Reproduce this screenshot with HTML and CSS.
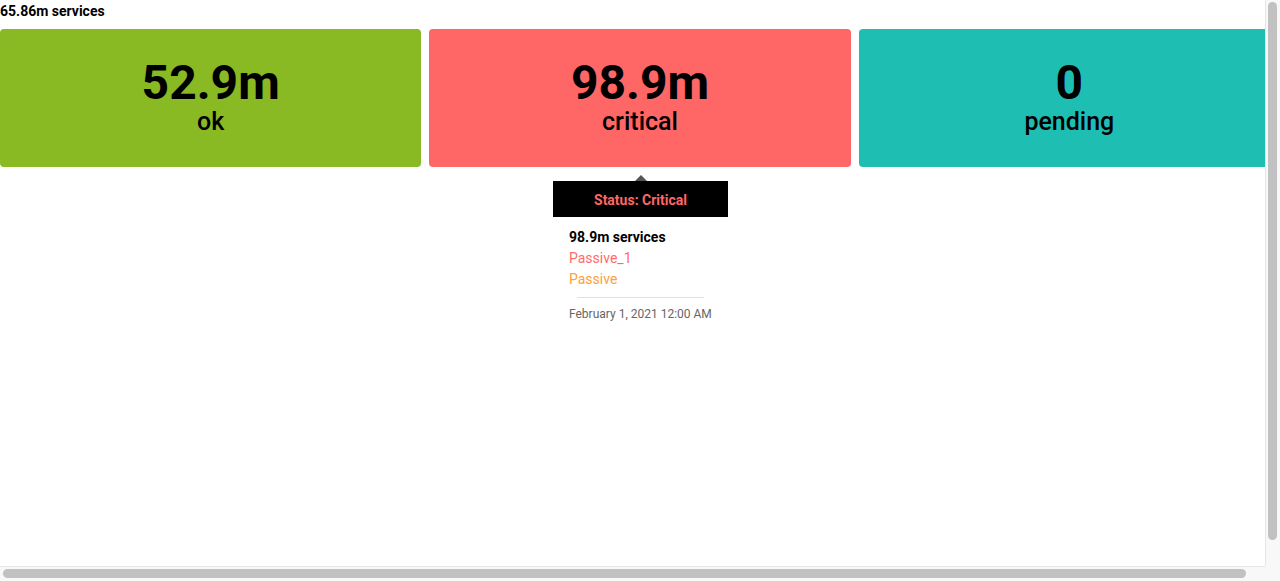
FILE: index.html
```html
<!DOCTYPE html>
<html lang="en">
<head>
<meta charset="utf-8">
<title>Services</title>
<link rel="stylesheet" href="styles.css">
</head>
<body>
<div class="page">
  <div class="title">65.86m services</div>
  <div class="cards">
    <div class="card card-ok">
      <div class="value">52.9m</div>
      <div class="label">ok</div>
    </div>
    <div class="card card-critical">
      <div class="value">98.9m</div>
      <div class="label">critical</div>
    </div>
    <div class="card card-pending">
      <div class="value">0</div>
      <div class="label">pending</div>
    </div>
  </div>
  <div class="tooltip">
    <div class="tooltip-arrow"></div>
    <div class="tooltip-head">Status: Critical</div>
    <div class="tooltip-body">
      <div class="tt-row tt-strong">98.9m services</div>
      <div class="tt-row tt-red">Passive_1</div>
      <div class="tt-row tt-orange">Passive</div>
      <div class="tt-divider"></div>
      <div class="tt-date">February 1, 2021 12:00 AM</div>
    </div>
  </div>
</div>
<div class="sb sb-v"><div class="sb-thumb sb-thumb-v"></div></div>
<div class="sb sb-h"><div class="sb-thumb sb-thumb-h"></div></div>
<div class="sb sb-corner"></div>
</body>
</html>
```
FILE: styles.css
```css
html, body {
  margin: 0;
  padding: 0;
  background: #ffffff;
  overflow: hidden;
}
body {
  font-family: Roboto, "Liberation Sans", Arial, sans-serif;
  color: #000;
}
.page {
  position: relative;
  width: 1280px;
  min-height: 591px;
}
.title {
  font-size: 14px;
  font-weight: 700;
  line-height: 22px;
  margin-bottom: 7px;
}
.cards {
  display: grid;
  grid-template-columns: repeat(3, 1fr);
  gap: 8px;
}
.card {
  height: 138px;
  box-sizing: border-box;
  padding-top: 30px;
  border-radius: 4px;
  display: flex;
  flex-direction: column;
  align-items: center;
  color: #000;
}
.card-ok { background: #89b923; }
.card-critical { background: #ff6666; }
.card-pending { background: #1fbeb2; }
.value {
  font-size: 48px;
  font-weight: 700;
  line-height: 48px;
}
.label {
  font-size: 25px;
  font-weight: 500;
  line-height: 26px;
  margin-top: 2px;
}
.tooltip {
  position: absolute;
  left: 553px;
  top: 175px;
  width: 175px;
  background: #fff;
}
.tooltip-arrow {
  width: 0;
  height: 0;
  margin: 0 auto;
  border-left: 6px solid transparent;
  border-right: 6px solid transparent;
  border-bottom: 6px solid #555;
}
.tooltip-head {
  background: #000;
  color: #ff6666;
  font-size: 14px;
  font-weight: 700;
  height: 36px;
  line-height: 38px;
  text-align: center;
}
.tooltip-body {
  padding: 10px 16px 8px 16px;
}
.tt-row {
  font-size: 14px;
  line-height: 21px;
}
.tt-strong { font-weight: 700; color: #000; }
.tt-red { color: #ff6b6b; }
.tt-orange { color: #ffa03a; }
.tt-divider {
  height: 1px;
  background: #e0e0e0;
  margin: 7px 8px 8px 8px;
}
.tt-date {
  font-size: 12px;
  line-height: 16px;
  color: #666;
}

/* browser scrollbars (overlay) */
.sb {
  position: fixed;
  background: #f8f8f8;
  box-sizing: border-box;
}
.sb-v {
  top: 0;
  right: 0;
  width: 15px;
  height: 566px;
  border-left: 1px solid #e6e6e6;
  padding: 2px 2px 0 2px;
}
.sb-h {
  left: 0;
  bottom: 0;
  width: 1265px;
  height: 15px;
  border-top: 1px solid #e6e6e6;
  padding: 2px 0 2px 3px;
}
.sb-corner {
  right: 0;
  bottom: 0;
  width: 15px;
  height: 15px;
}
.sb-thumb {
  background: #c1c1c1;
  border-radius: 5px;
}
.sb-thumb-v {
  width: 9px;
  height: 538px;
}
.sb-thumb-h {
  width: 1243px;
  height: 9px;
}
```
